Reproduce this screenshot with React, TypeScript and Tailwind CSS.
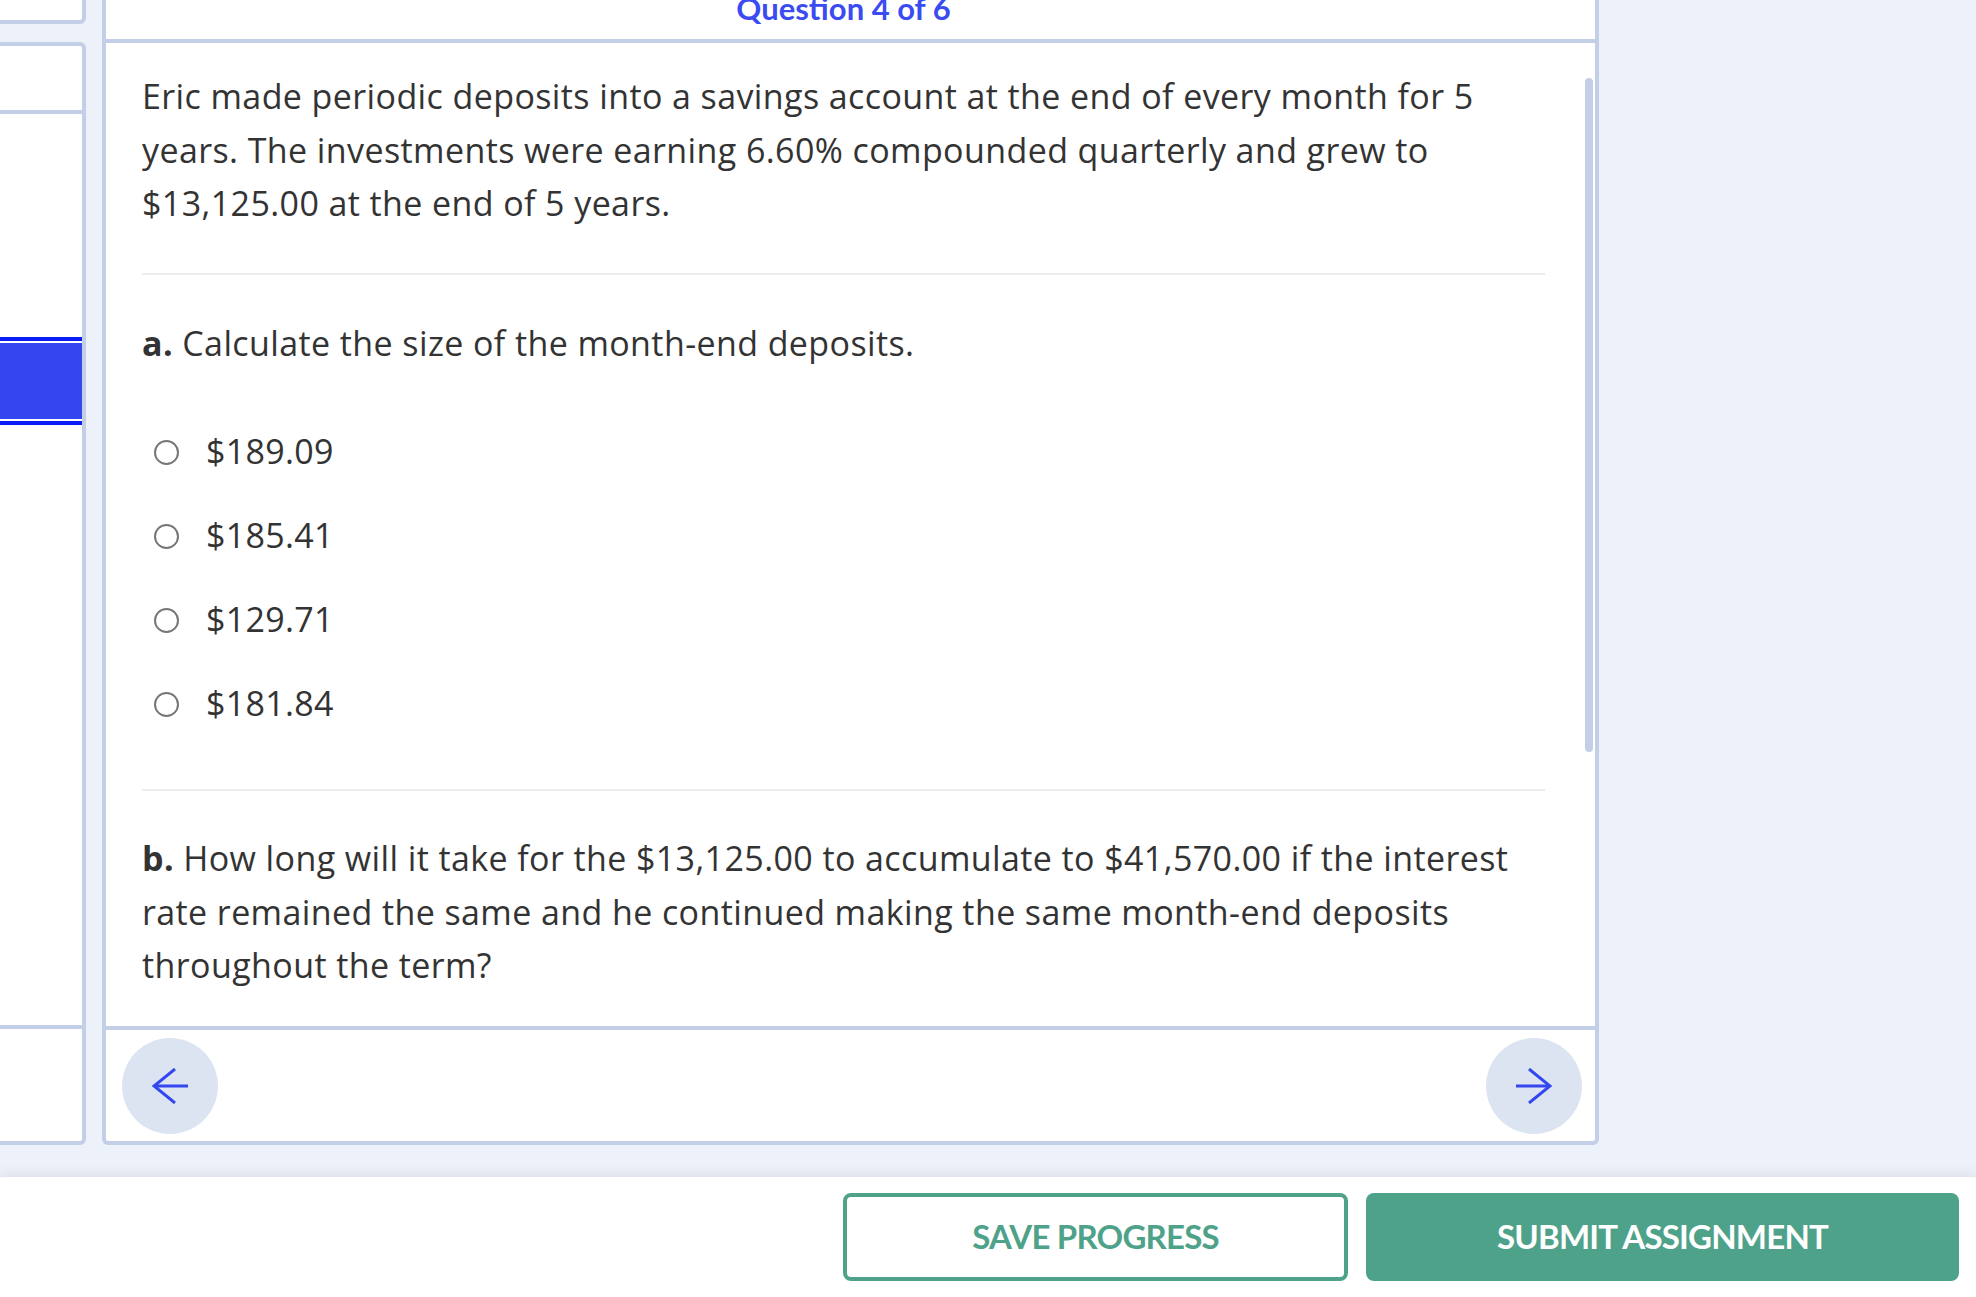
import React from 'react';

const options = ['$189.09', '$185.41', '$129.71', '$181.84'];

const Arrow = ({ dir }: { dir: 'left' | 'right' }) => (
    <svg width="36" height="36" viewBox="0 0 36 36" fill="none" stroke="#3346f0" strokeWidth={3} strokeLinecap="butt" strokeLinejoin="miter" className={dir === 'right' ? 'rotate-180' : ''}>
        <path d="M23 1 L2 18 L23 35" />
        <path d="M2 18 H36" />
    </svg>
);

export default function App() {
    return (
        <div className="w-[1976px] h-[1297px] bg-[#edf1f9] flex flex-col overflow-hidden text-[#333]">
            <div className="h-[1177px] flex shrink-0">
                {/* sidebar */}
                <div className="w-[86px] shrink-0 flex flex-col">
                    <div className="h-[24px] bg-white border-r-4 border-b-4 border-[#c3cfe6] rounded-br-md" />
                    <div className="mt-[18px] h-[1103px] bg-white border-r-4 border-y-4 border-[#c3cfe6] rounded-r-md flex flex-col">
                        <div className="h-[68px] border-b-4 border-[#c3cfe6]" />
                        <div className="h-[223px]" />
                        <div className="border-y-[4px] border-[#0b1cf6] py-[2px] bg-white">
                            <div className="h-[76px] bg-[#3346f0]" />
                        </div>
                        <div className="h-[604px] border-b-4 border-[#c3cfe6]" />
                        <div className="flex-1" />
                    </div>
                </div>

                {/* main panel */}
                <div className="ml-[16px] w-[1497px] h-[1145px] shrink-0 bg-white border-x-4 border-b-4 border-[#c3cfe6] rounded-b-md flex flex-col">
                    <div className="h-[43px] shrink-0 overflow-hidden border-b-4 border-[#c3cfe6] flex justify-center pr-[14px]">
                        <div className="-mt-[7px] leading-[31px] text-[31px] font-bold text-[#3a4cf1] font-['Lato',sans-serif]">Question 4 of 6</div>
                    </div>

                    <div className="relative h-[983px] shrink-0 overflow-hidden pl-[36px] pr-[50px] pt-[27px] font-['Open_Sans',sans-serif] text-[34px] tracking-[0.4px] leading-[53.5px]">
                        <p>Eric made periodic deposits into a savings account at the end of every month for 5 years. The investments were earning 6.60% compounded quarterly and grew to $13,125.00 at the end of 5 years.</p>
                        <div className="mt-[42px] h-[2px] bg-[#ececec]" />
                        <p className="mt-[42px]"><span className="font-bold">a.</span> Calculate the size of the month-end deposits.</p>
                        <div className="mt-[40px] flex flex-col">
                            {options.map(o => (
                                <label key={o} className="h-[84px] flex items-center">
                                    <span className="ml-[12px] w-[25px] h-[25px] rounded-full border-2 border-[#767676] bg-white shrink-0" />
                                    <span className="ml-[27px] text-[34px] tracking-[0.3px]">{o}</span>
                                </label>
                            ))}
                        </div>
                        <div className="mt-[43px] h-[2px] bg-[#ececec]" />
                        <p className="mt-[41px]"><span className="font-bold">b.</span> How long will it take for the $13,125.00 to accumulate to $41,570.00 if the interest rate remained the same and he continued making the same month-end deposits throughout the term?</p>
                        <div className="absolute right-[2px] top-[35px] w-[8px] h-[674px] rounded-full bg-[#c3cfe6]" />
                    </div>

                    <div className="flex-1 border-t-4 border-[#c3cfe6] flex items-center justify-between pl-[16px] pr-[13px]">
                        <button className="w-[96px] h-[96px] rounded-full bg-[#dde4f1] flex items-center justify-center">
                            <Arrow dir="left" />
                        </button>
                        <button className="w-[96px] h-[96px] rounded-full bg-[#dde4f1] flex items-center justify-center">
                            <Arrow dir="right" />
                        </button>
                    </div>
                </div>
            </div>

            <div className="h-[120px] shrink-0 bg-white shadow-[0_-4px_10px_rgba(0,0,0,0.07)] flex justify-end items-start pt-[16px] pr-[17px] gap-[18px] font-['Lato',sans-serif]">
                <button className="w-[505px] h-[88px] rounded-lg border-4 border-[#4fa28a] bg-white text-[#4fa28a] text-[33px] font-bold tracking-[-0.8px]">SAVE PROGRESS</button>
                <button className="w-[593px] h-[88px] rounded-lg bg-[#4fa28a] text-white text-[33px] font-bold tracking-[-0.8px]">SUBMIT ASSIGNMENT</button>
            </div>
        </div>
    );
}
